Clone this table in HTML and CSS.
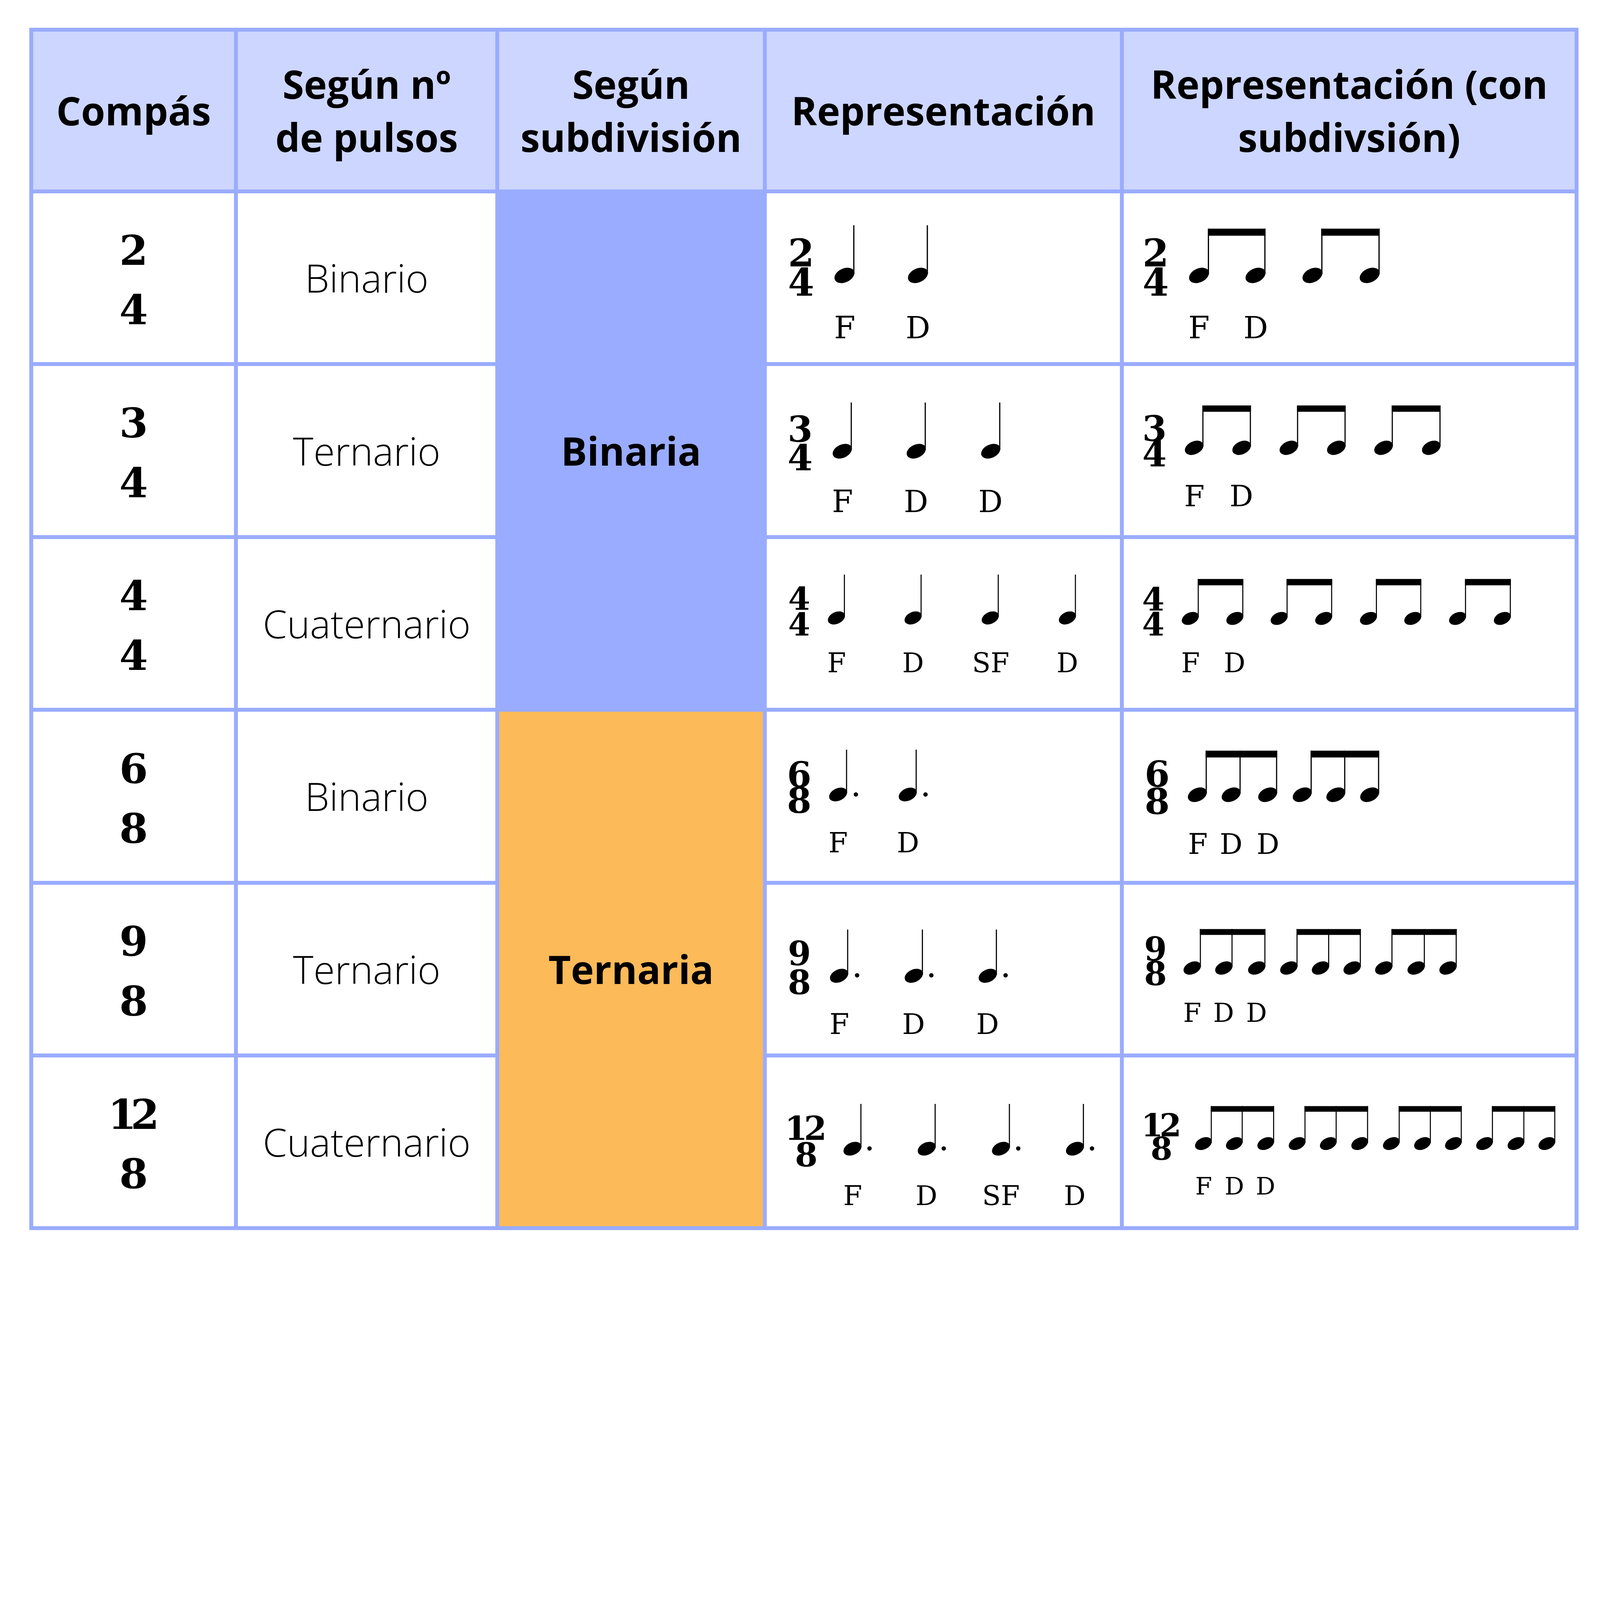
FILE: index.html
```html
<!DOCTYPE html>
<html lang="es">
<head>
<meta charset="utf-8">
<title>Compases</title>
<link rel="stylesheet" href="styles.css">
</head>
<body>
<div class="table">
  <div class="cell head">Compás</div>
  <div class="cell head">Según nº<br>de pulsos</div>
  <div class="cell head">Según<br>subdivisión</div>
  <div class="cell head">Representación</div>
  <div class="cell head">Representación (con<br>subdivsión)</div>

  <!-- 2/4 -->
  <div class="cell sig"><span>2</span><span>4</span></div>
  <div class="cell pulse">Binario</div>
  <div class="cell group binaria">Binaria</div>
  <div class="cell score">
    <svg viewBox="0 0 1451 694">
      <defs><ellipse id="nh" rx="43.3" ry="28.3" transform="rotate(-25)"/></defs>
      <g class="ts" font-size="155"><text x="141" y="300">2</text><text x="141" y="421">4</text></g>
      <use href="#nh" transform="translate(319 337)"/>
      <rect x="355" y="131" width="5" height="200"/>
      <use href="#nh" transform="translate(621 337)"/>
      <rect x="657" y="131" width="5" height="200"/>
      <g class="lb" font-size="126"><text x="320" y="596">F</text><text x="621" y="596">D</text></g>
    </svg>
  </div>
  <div class="cell score">
    <svg viewBox="0 0 1852 694">
      <g class="ts" font-size="155"><text x="131" y="300">2</text><text x="131" y="421">4</text></g>
      <use href="#nh" transform="translate(309 337)"/>
      <use href="#nh" transform="translate(541 337)"/>
      <use href="#nh" transform="translate(775 337)"/>
      <use href="#nh" transform="translate(1010 337)"/>
      <rect x="345" y="145" width="5" height="186"/>
      <rect x="577" y="145" width="5" height="186"/>
      <rect x="811" y="145" width="5" height="186"/>
      <rect x="1046" y="145" width="5" height="186"/>
      <rect x="345" y="145" width="237" height="29"/>
      <rect x="811" y="145" width="240" height="29"/>
      <g class="lb" font-size="126"><text x="309" y="596">F</text><text x="542" y="596">D</text></g>
    </svg>
  </div>

  <!-- 3/4 -->
  <div class="cell sig"><span>3</span><span>4</span></div>
  <div class="cell pulse">Ternario</div>
  <div class="cell score">
    <svg viewBox="0 0 1451 694">
      <g class="ts" font-size="148"><text x="137" y="311">3</text><text x="137" y="429">4</text></g>
      <use href="#nh" transform="translate(310 350) scale(0.96)"/>
      <use href="#nh" transform="translate(614 350) scale(0.96)"/>
      <use href="#nh" transform="translate(920 350) scale(0.96)"/>
      <rect x="344.6" y="150" width="4.8" height="194"/>
      <rect x="648.6" y="150" width="4.8" height="194"/>
      <rect x="954.6" y="150" width="4.8" height="194"/>
      <g class="lb" font-size="125"><text x="311" y="600">F</text><text x="613" y="600">D</text><text x="919" y="600">D</text></g>
    </svg>
  </div>
  <div class="cell score">
    <svg viewBox="0 0 1852 694">
      <g class="ts" font-size="144"><text x="126" y="308">3</text><text x="126" y="413">4</text></g>
      <use href="#nh" transform="translate(289 336) scale(0.93)"/>
      <use href="#nh" transform="translate(484 336) scale(0.93)"/>
      <use href="#nh" transform="translate(678 336) scale(0.93)"/>
      <use href="#nh" transform="translate(873 336) scale(0.93)"/>
      <use href="#nh" transform="translate(1067 336) scale(0.93)"/>
      <use href="#nh" transform="translate(1263 336) scale(0.93)"/>
      <rect x="322.5" y="162" width="4.65" height="168.4"/>
      <rect x="517.5" y="162" width="4.65" height="168.4"/>
      <rect x="711.5" y="162" width="4.65" height="168.4"/>
      <rect x="906.5" y="162" width="4.65" height="168.4"/>
      <rect x="1100.5" y="162" width="4.65" height="168.4"/>
      <rect x="1296.5" y="162" width="4.65" height="168.4"/>
      <rect x="322.5" y="162" width="199.65" height="26"/>
      <rect x="711.5" y="162" width="199.65" height="26"/>
      <rect x="1100.5" y="162" width="200.65" height="26"/>
      <g class="lb" font-size="121"><text x="290" y="576">F</text><text x="483" y="576">D</text></g>
    </svg>
  </div>

  <!-- 4/4 -->
  <div class="cell sig"><span>4</span><span>4</span></div>
  <div class="cell pulse">Cuaternario</div>
  <div class="cell score">
    <svg viewBox="0 0 1451 694">
      <g class="ts" font-size="130"><text x="133" y="291">4</text><text x="133" y="396">4</text></g>
      <use href="#nh" transform="translate(286 324) scale(0.854)"/>
      <use href="#nh" transform="translate(601 324) scale(0.854)"/>
      <use href="#nh" transform="translate(918 324) scale(0.854)"/>
      <use href="#nh" transform="translate(1235 324) scale(0.854)"/>
      <rect x="316.7" y="146" width="4.3" height="173"/>
      <rect x="631.7" y="146" width="4.3" height="173"/>
      <rect x="948.7" y="146" width="4.3" height="173"/>
      <rect x="1265.7" y="146" width="4.3" height="173"/>
      <g class="lb" font-size="111"><text x="287" y="548">F</text><text x="601" y="548">D</text><text x="920" y="548">SF</text><text x="1235" y="548">D</text></g>
    </svg>
  </div>
  <div class="cell score">
    <svg viewBox="0 0 1852 694">
      <g class="ts" font-size="132"><text x="121" y="294">4</text><text x="121" y="397">4</text></g>
      <use href="#nh" transform="translate(273 326) scale(0.85)"/>
      <use href="#nh" transform="translate(456 326) scale(0.85)"/>
      <use href="#nh" transform="translate(638 326) scale(0.85)"/>
      <use href="#nh" transform="translate(821 326) scale(0.85)"/>
      <use href="#nh" transform="translate(1005 326) scale(0.85)"/>
      <use href="#nh" transform="translate(1187 326) scale(0.85)"/>
      <use href="#nh" transform="translate(1371 326) scale(0.85)"/>
      <use href="#nh" transform="translate(1555 326) scale(0.85)"/>
      <rect x="303.6" y="164" width="4.25" height="156.9"/>
      <rect x="486.6" y="164" width="4.25" height="156.9"/>
      <rect x="668.6" y="164" width="4.25" height="156.9"/>
      <rect x="851.6" y="164" width="4.25" height="156.9"/>
      <rect x="1035.6" y="164" width="4.25" height="156.9"/>
      <rect x="1217.6" y="164" width="4.25" height="156.9"/>
      <rect x="1401.6" y="164" width="4.25" height="156.9"/>
      <rect x="1585.6" y="164" width="4.25" height="156.9"/>
      <rect x="303.6" y="164" width="187.25" height="26"/>
      <rect x="668.6" y="164" width="187.25" height="26"/>
      <rect x="1035.6" y="164" width="186.25" height="26"/>
      <rect x="1401.6" y="164" width="188.25" height="26"/>
      <g class="lb" font-size="111"><text x="274" y="548">F</text><text x="455" y="548">D</text></g>
    </svg>
  </div>

  <!-- 6/8 -->
  <div class="cell sig"><span>6</span><span>8</span></div>
  <div class="cell pulse">Binario</div>
  <div class="cell group ternaria">Ternaria</div>
  <div class="cell score">
    <svg viewBox="0 0 1451 694">
      <g class="ts" font-size="144"><text x="133" y="309">6</text><text x="133" y="416">8</text></g>
      <use href="#nh" transform="translate(293 340) scale(0.9)"/>
      <use href="#nh" transform="translate(579 340) scale(0.9)"/>
      <rect x="325.4" y="156" width="4.5" height="178.6"/>
      <rect x="611.4" y="156" width="4.5" height="178.6"/>
      <circle cx="366" cy="340" r="9"/>
      <circle cx="652" cy="340" r="9"/>
      <g class="lb" font-size="115"><text x="293" y="577">F</text><text x="580" y="577">D</text></g>
    </svg>
  </div>
  <div class="cell score">
    <svg viewBox="0 0 1852 694">
      <g class="ts" font-size="148"><text x="137" y="308">6</text><text x="137" y="420">8</text></g>
      <use href="#nh" transform="translate(302 341) scale(0.95)"/>
      <use href="#nh" transform="translate(441 341) scale(0.95)"/>
      <use href="#nh" transform="translate(591 341) scale(0.95)"/>
      <use href="#nh" transform="translate(733 341) scale(0.95)"/>
      <use href="#nh" transform="translate(871 341) scale(0.95)"/>
      <use href="#nh" transform="translate(1010 341) scale(0.95)"/>
      <rect x="336.2" y="160" width="4.75" height="175.3"/>
      <rect x="475.2" y="160" width="4.75" height="175.3"/>
      <rect x="625.2" y="160" width="4.75" height="175.3"/>
      <rect x="767.2" y="160" width="4.75" height="175.3"/>
      <rect x="905.2" y="160" width="4.75" height="175.3"/>
      <rect x="1044.2" y="160" width="4.75" height="175.3"/>
      <rect x="336.2" y="160" width="293.75" height="28"/>
      <rect x="767.2" y="160" width="281.75" height="28"/>
      <g class="lb" font-size="117"><text x="304" y="584">F</text><text x="441" y="584">D</text><text x="592" y="584">D</text></g>
    </svg>
  </div>

  <!-- 9/8 -->
  <div class="cell sig"><span>9</span><span>8</span></div>
  <div class="cell pulse">Ternario</div>
  <div class="cell score">
    <svg viewBox="0 0 1451 694">
      <g class="ts" font-size="137"><text x="134" y="331">9</text><text x="134" y="449">8</text></g>
      <use href="#nh" transform="translate(297 374) scale(0.915)"/>
      <use href="#nh" transform="translate(604 374) scale(0.915)"/>
      <use href="#nh" transform="translate(908 374) scale(0.915)"/>
      <rect x="329.9" y="184" width="4.6" height="184.5"/>
      <rect x="636.9" y="184" width="4.6" height="184.5"/>
      <rect x="940.9" y="184" width="4.6" height="184.5"/>
      <circle cx="371" cy="372" r="9"/>
      <circle cx="676" cy="372" r="9"/>
      <circle cx="981" cy="372" r="9"/>
      <g class="lb" font-size="117"><text x="298" y="613">F</text><text x="603" y="613">D</text><text x="907" y="613">D</text></g>
    </svg>
  </div>
  <div class="cell score">
    <svg viewBox="0 0 1852 694">
      <g class="ts" font-size="134"><text x="130" y="312">9</text><text x="130" y="412">8</text></g>
      <use href="#nh" transform="translate(281 342) scale(0.87)"/>
      <use href="#nh" transform="translate(411 342) scale(0.87)"/>
      <use href="#nh" transform="translate(546 342) scale(0.87)"/>
      <use href="#nh" transform="translate(678 342) scale(0.87)"/>
      <use href="#nh" transform="translate(808 342) scale(0.87)"/>
      <use href="#nh" transform="translate(938 342) scale(0.87)"/>
      <use href="#nh" transform="translate(1068 342) scale(0.87)"/>
      <use href="#nh" transform="translate(1201 342) scale(0.87)"/>
      <use href="#nh" transform="translate(1332 342) scale(0.87)"/>
      <rect x="312.3" y="182" width="4.35" height="154.8"/>
      <rect x="442.3" y="182" width="4.35" height="154.8"/>
      <rect x="577.3" y="182" width="4.35" height="154.8"/>
      <rect x="709.3" y="182" width="4.35" height="154.8"/>
      <rect x="839.3" y="182" width="4.35" height="154.8"/>
      <rect x="969.3" y="182" width="4.35" height="154.8"/>
      <rect x="1099.3" y="182" width="4.35" height="154.8"/>
      <rect x="1232.3" y="182" width="4.35" height="154.8"/>
      <rect x="1363.3" y="182" width="4.35" height="154.8"/>
      <rect x="312.3" y="182" width="269.35" height="24"/>
      <rect x="709.3" y="182" width="264.35" height="24"/>
      <rect x="1099.3" y="182" width="268.35" height="24"/>
      <g class="lb" font-size="107"><text x="281" y="564">F</text><text x="410" y="564">D</text><text x="545" y="564">D</text></g>
    </svg>
  </div>

  <!-- 12/8 -->
  <div class="cell sig"><span class="twelve">12</span><span>8</span></div>
  <div class="cell pulse">Cuaternario</div>
  <div class="cell score">
    <svg viewBox="0 0 1451 694">
      <g class="ts" font-size="134"><text x="160" y="338">1<tspan dx="-14">2</tspan></text><text x="162" y="447">8</text></g>
      <use href="#nh" transform="translate(352 375) scale(0.9)"/>
      <use href="#nh" transform="translate(657 375) scale(0.9)"/>
      <use href="#nh" transform="translate(962 375) scale(0.9)"/>
      <use href="#nh" transform="translate(1266 375) scale(0.9)"/>
      <rect x="384.4" y="191" width="4.5" height="178.6"/>
      <rect x="689.4" y="191" width="4.5" height="178.6"/>
      <rect x="994.4" y="191" width="4.5" height="178.6"/>
      <rect x="1298.4" y="191" width="4.5" height="178.6"/>
      <circle cx="422" cy="374" r="9"/>
      <circle cx="727" cy="374" r="9"/>
      <circle cx="1033" cy="374" r="9"/>
      <circle cx="1336" cy="374" r="9"/>
      <g class="lb" font-size="112"><text x="353" y="606">F</text><text x="656" y="606">D</text><text x="962" y="606">SF</text><text x="1265" y="606">D</text></g>
    </svg>
  </div>
  <div class="cell score">
    <svg viewBox="0 0 1852 694">
      <g class="ts" font-size="129"><text x="154" y="324">1<tspan dx="-14">2</tspan></text><text x="155" y="420">8</text></g>
      <use href="#nh" transform="translate(327 354) scale(0.84)"/>
      <use href="#nh" transform="translate(454 354) scale(0.84)"/>
      <use href="#nh" transform="translate(583 354) scale(0.84)"/>
      <use href="#nh" transform="translate(712 354) scale(0.84)"/>
      <use href="#nh" transform="translate(840 354) scale(0.84)"/>
      <use href="#nh" transform="translate(969 354) scale(0.84)"/>
      <use href="#nh" transform="translate(1099 354) scale(0.84)"/>
      <use href="#nh" transform="translate(1227 354) scale(0.84)"/>
      <use href="#nh" transform="translate(1354 354) scale(0.84)"/>
      <use href="#nh" transform="translate(1482 354) scale(0.84)"/>
      <use href="#nh" transform="translate(1611 354) scale(0.84)"/>
      <use href="#nh" transform="translate(1738 354) scale(0.84)"/>
      <rect x="357.2" y="200" width="4.2" height="149"/>
      <rect x="484.2" y="200" width="4.2" height="149"/>
      <rect x="613.2" y="200" width="4.2" height="149"/>
      <rect x="742.2" y="200" width="4.2" height="149"/>
      <rect x="870.2" y="200" width="4.2" height="149"/>
      <rect x="999.2" y="200" width="4.2" height="149"/>
      <rect x="1129.2" y="200" width="4.2" height="149"/>
      <rect x="1257.2" y="200" width="4.2" height="149"/>
      <rect x="1384.2" y="200" width="4.2" height="149"/>
      <rect x="1512.2" y="200" width="4.2" height="149"/>
      <rect x="1641.2" y="200" width="4.2" height="149"/>
      <rect x="1768.2" y="200" width="4.2" height="149"/>
      <rect x="357.2" y="200" width="260.2" height="23"/>
      <rect x="742.2" y="200" width="261.2" height="23"/>
      <rect x="1129.2" y="200" width="259.2" height="23"/>
      <rect x="1512.2" y="200" width="260.2" height="23"/>
      <g class="lb" font-size="100"><text x="328" y="563">F</text><text x="454" y="563">D</text><text x="582" y="563">D</text></g>
    </svg>
  </div>
</div>
</body>
</html>
```

FILE: styles.css
```css
:root {
  --u: calc(100vw / 6573);
}

html, body {
  margin: 0;
  padding: 0;
  background: #ffffff;
  overflow: hidden;
}

body {
  padding: calc(114 * var(--u)) 0 0 calc(120 * var(--u));
}

.table {
  display: grid;
  grid-template-columns:
    calc(826 * var(--u))
    calc(1057 * var(--u))
    calc(1083 * var(--u))
    calc(1451 * var(--u))
    calc(1852 * var(--u));
  grid-template-rows: calc(648 * var(--u)) repeat(6, calc(694 * var(--u)));
  gap: calc(16 * var(--u));
  padding: calc(16 * var(--u));
  width: max-content;
  background: #9aacff;
}

.cell {
  background: #ffffff;
  display: flex;
  align-items: center;
  justify-content: center;
  text-align: center;
  color: #000000;
}

.head {
  background: #cdd6ff;
  font-family: "Open Sans", "Noto Sans", sans-serif;
  font-weight: 700;
  font-size: calc(160 * var(--u));
  line-height: 1.362;
}

.pulse {
  font-family: "Open Sans", "Noto Sans", sans-serif;
  font-weight: 300;
  font-size: calc(160 * var(--u));
  line-height: 1.362;
}

.group {
  grid-column: 3;
  grid-row: span 3;
  font-family: "Open Sans", "Noto Sans", sans-serif;
  font-weight: 700;
  font-size: calc(160 * var(--u));
  line-height: 1.362;
}

.binaria {
  background: #9aacff;
}

.ternaria {
  background: #fcba59;
}

.sig {
  flex-direction: column;
  padding-top: calc(20 * var(--u));
  font-family: "DejaVu Serif", serif;
  font-weight: 700;
  font-size: calc(169 * var(--u));
  line-height: calc(245 * var(--u));
}

.twelve {
  letter-spacing: calc(-24 * var(--u));
  padding-right: calc(24 * var(--u));
}

.score {
  display: block;
}

.score svg {
  display: block;
  width: 100%;
  height: 100%;
  fill: #000000;
}

.ts {
  font-family: "DejaVu Serif", serif;
  font-weight: 700;
  text-anchor: middle;
}

.lb {
  font-family: "DejaVu Serif", serif;
  font-weight: 400;
  text-anchor: middle;
}
```
